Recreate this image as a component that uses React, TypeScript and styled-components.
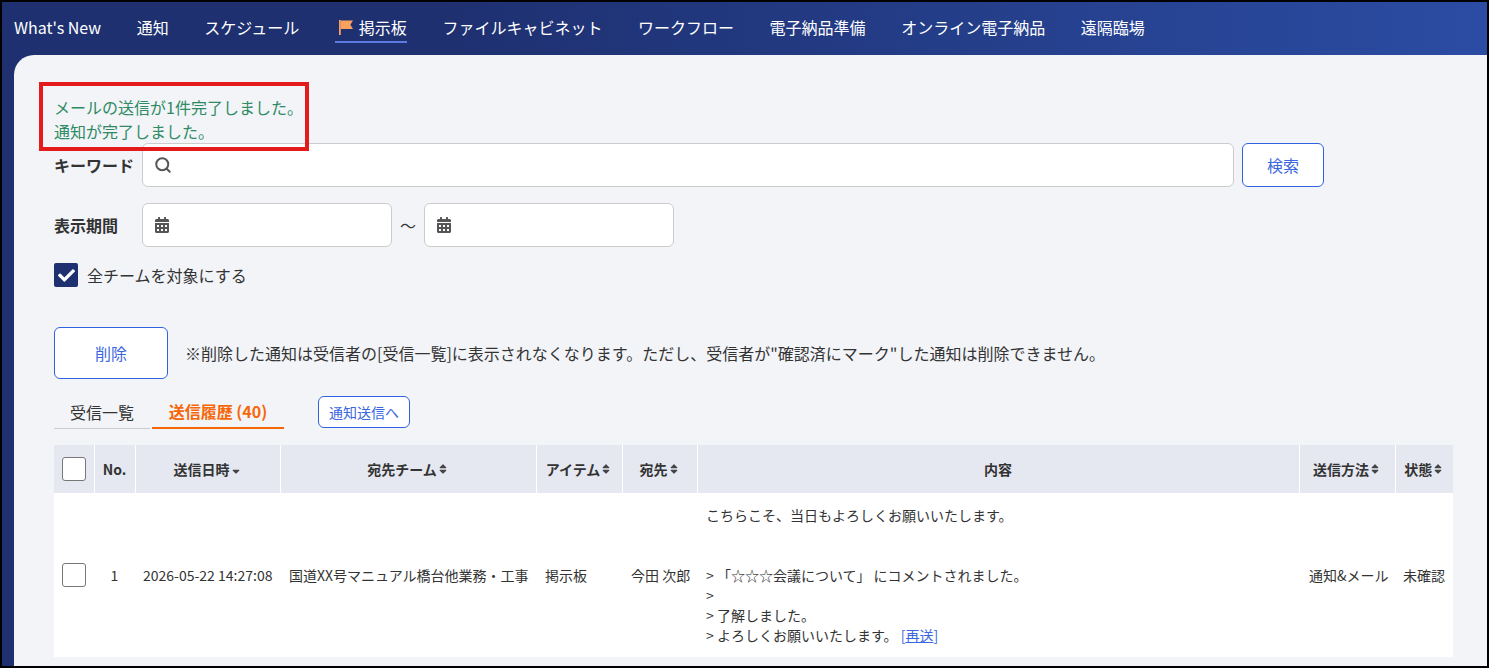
import styled, { createGlobalStyle } from 'styled-components';
import { FaCalendarAlt, FaCheck, FaSort, FaSortDown } from 'react-icons/fa';
import { Search } from 'lucide-react';

const navItems = [
  "What's New",
  '通知',
  'スケジュール',
  '掲示板',
  'ファイルキャビネット',
  'ワークフロー',
  '電子納品準備',
  'オンライン電子納品',
  '遠隔臨場',
];

const columns = [
  { label: '', width: 40 },
  { label: 'No.', width: 41 },
  { label: '送信日時', width: 145, sort: 'down' },
  { label: '宛先チーム', width: 256, sort: 'both' },
  { label: 'アイテム', width: 86, sort: 'both' },
  { label: '宛先', width: 75, sort: 'both' },
  { label: '内容', width: 602 },
  { label: '送信方法', width: 96, sort: 'both' },
  { label: '状態', width: 58, sort: 'both' },
];

function App() {
  return (
    <Frame>
      <GlobalStyle />
      <NavBar>
        {navItems.map((item) => (
          <NavItem key={item} $active={item === '掲示板'}>
            {item === '掲示板' && (
              <FlagIcon width="16" height="16" viewBox="0 0 16 16">
                <path d="M1 1h1.8v15H1z" fill="#f9a15f" />
                <path d="M2.8 1.5H15l-2.6 4.2 2.6 4.3H2.8z" fill="#f9a15f" />
              </FlagIcon>
            )}
            {item}
          </NavItem>
        ))}
      </NavBar>
      <Panel>
        <Messages>
          <div>メールの送信が1件完了しました。</div>
          <div>通知が完了しました。</div>
        </Messages>
        <RedMark />
        <FormRow>
          <FieldLabel>キーワード</FieldLabel>
          <KeywordBox>
            <Search size={18} color="#555" strokeWidth={2.6} />
          </KeywordBox>
          <OutlineButton $width={82} $height={44}>検索</OutlineButton>
        </FormRow>
        <DateRow>
          <FieldLabel>表示期間</FieldLabel>
          <DateBox>
            <FaCalendarAlt size={16} color="#555" />
          </DateBox>
          <Tilde>～</Tilde>
          <DateBox>
            <FaCalendarAlt size={16} color="#555" />
          </DateBox>
        </DateRow>
        <CheckRow>
          <CheckedBox>
            <FaCheck size={17} color="#fff" />
          </CheckedBox>
          全チームを対象にする
        </CheckRow>
        <DeleteRow>
          <OutlineButton $width={114} $height={52}>削除</OutlineButton>
          <Note>
            ※削除した通知は受信者の[受信一覧]に表示されなくなります。ただし、受信者が"確認済にマーク"した通知は削除できません。
          </Note>
        </DeleteRow>
        <TabRow>
          <Tab>受信一覧</Tab>
          <ActiveTab>送信履歴 (40)</ActiveTab>
          <SmallButton>通知送信へ</SmallButton>
        </TabRow>
        <Table>
          <colgroup>
            {columns.map((c, i) => (
              <col key={i} width={c.width} />
            ))}
          </colgroup>
          <thead>
            <tr>
              {columns.map((c, i) => (
                <Th key={i}>
                  {i === 0 ? (
                    <CheckBox />
                  ) : (
                    <HeadInner>
                      {c.label}
                      {c.sort === 'both' && <FaSort size={12} color="#444" />}
                      {c.sort === 'down' && <FaSortDown size={12} color="#444" />}
                    </HeadInner>
                  )}
                </Th>
              ))}
            </tr>
          </thead>
          <tbody>
            <tr>
              <CenterCell><CheckBox /></CenterCell>
              <CenterCell>1</CenterCell>
              <Td $pad={8}>2026-05-22 14:27:08</Td>
              <Td>国道XX号マニュアル橋台他業務・工事</Td>
              <Td>掲示板</Td>
              <Td>今田 次郎</Td>
              <BodyCell>
                <div>こちらこそ、当日もよろしくお願いいたします。</div>
                <div>&nbsp;</div>
                <div>&nbsp;</div>
                <div>&gt; 「☆☆☆会議について」 にコメントされました。</div>
                <div>&gt;</div>
                <div>&gt; 了解しました。</div>
                <div>
                  &gt; よろしくお願いいたします。 <Resend>[<u>再送</u>]</Resend>
                </div>
              </BodyCell>
              <Td $pad={10}>通知&amp;メール</Td>
              <Td $pad={8}>未確認</Td>
            </tr>
          </tbody>
        </Table>
      </Panel>
    </Frame>
  );
}

const GlobalStyle = createGlobalStyle`
  html, body {
    margin: 0;
    padding: 0;
    background: #1e3070;
  }
  * {
    box-sizing: border-box;
  }
`;

const Frame = styled.div`
  width: 1489px;
  height: 668px;
  border: 2px solid #000;
  overflow: hidden;
  background: linear-gradient(90deg, #1e3070 0%, #1e3070 30%, #2b4ca3 100%);
  font-family: 'Noto Sans CJK JP', 'Noto Sans', sans-serif;
  color: #333;
`;

const NavBar = styled.nav`
  height: 53px;
  display: flex;
  align-items: center;
  gap: 35.6px;
  padding: 0 0 3px 12px;
`;

const NavItem = styled.div<{ $active?: boolean }>`
  display: flex;
  align-items: center;
  height: 30px;
  color: #fff;
  font-size: 16px;
  line-height: 28px;
  margin-top: 1px;
  border-bottom: 2px solid ${(p) => (p.$active ? '#5b7be3' : 'transparent')};
`;

const FlagIcon = styled.svg`
  margin: 0 5px 0 3px;
`;

const Panel = styled.main`
  position: relative;
  height: 611px;
  margin-left: 12px;
  padding: 40px 34px 0 40px;
  background: #f2f4f8;
  border-top-left-radius: 20px;
`;

const Messages = styled.div`
  height: 48px;
  color: #2f8a63;
  font-size: 16px;
  line-height: 24px;
`;

const RedMark = styled.div`
  position: absolute;
  left: 25px;
  top: 27px;
  width: 270px;
  height: 69px;
  border: 4px solid #e31b1b;
  pointer-events: none;
`;

const FormRow = styled.div`
  display: flex;
  align-items: center;
  height: 44px;
`;

const DateRow = styled(FormRow)`
  margin-top: 16px;
`;

const FieldLabel = styled.div`
  width: 88px;
  font-size: 16px;
  font-weight: 700;
`;

const KeywordBox = styled.div`
  width: 1092px;
  height: 44px;
  margin-right: 8px;
  padding-left: 11px;
  display: flex;
  align-items: center;
  background: #fff;
  border: 1px solid #ccc;
  border-radius: 6px;
`;

const DateBox = styled(KeywordBox)`
  width: 250px;
  margin-right: 0;
`;

const Tilde = styled.span`
  width: 32px;
  text-align: center;
  font-size: 16px;
`;

const OutlineButton = styled.button<{ $width: number; $height: number }>`
  width: ${(p) => p.$width}px;
  height: ${(p) => p.$height}px;
  flex-shrink: 0;
  background: #fff;
  border: 1px solid #2f62e0;
  border-radius: 6px;
  color: #3a66e0;
  font-family: inherit;
  font-size: 16px;
`;

const CheckRow = styled.div`
  display: flex;
  align-items: center;
  gap: 9px;
  height: 24px;
  margin-top: 16px;
  font-size: 16px;
`;

const CheckedBox = styled.span`
  width: 24px;
  height: 24px;
  display: flex;
  align-items: center;
  justify-content: center;
  background: #1e3070;
  border-radius: 2px;
`;

const DeleteRow = styled.div`
  display: flex;
  align-items: center;
  gap: 17px;
  margin-top: 40px;
`;

const Note = styled.div`
  font-size: 16px;
  white-space: nowrap;
`;

const TabRow = styled.div`
  display: flex;
  align-items: flex-start;
  height: 32px;
  margin-top: 17px;
`;

const Tab = styled.div`
  width: 96px;
  height: 33px;
  line-height: 32px;
  text-align: center;
  font-size: 16px;
  border-bottom: 1px solid #ccc;
`;

const ActiveTab = styled.div`
  width: 132px;
  height: 33px;
  margin-left: 2px;
  line-height: 31px;
  text-align: center;
  font-size: 16px;
  font-weight: 700;
  color: #f76707;
  border-bottom: 2px solid #f76707;
`;

const SmallButton = styled.button`
  width: 92px;
  height: 32px;
  margin-left: 34px;
  padding: 0;
  background: #fff;
  border: 1px solid #2f62e0;
  border-radius: 6px;
  color: #3a66e0;
  font-family: inherit;
  font-size: 14px;
`;

const Table = styled.table`
  width: 1399px;
  margin-top: 17px;
  border-collapse: collapse;
  table-layout: fixed;
  background: #fff;
`;

const Th = styled.th`
  height: 48px;
  padding: 0;
  background: #e5e8f1;
  border-left: 1px solid #fff;
  font-size: 14px;
  font-weight: 700;
  text-align: center;
  &:first-child {
    border-left: none;
  }
`;

const HeadInner = styled.span`
  display: inline-flex;
  align-items: center;
`;

const Td = styled.td<{ $pad?: number }>`
  height: 164px;
  padding: 0 0 1px ${(p) => p.$pad ?? 9}px;
  font-size: 14px;
  text-align: left;
  white-space: nowrap;
`;

const CenterCell = styled(Td)`
  padding: 0 0 1px;
  text-align: center;
`;

const BodyCell = styled(Td)`
  line-height: 20px;
`;

const Resend = styled.span`
  color: #3a66e0;
`;

const CheckBox = styled.span`
  display: inline-block;
  width: 24px;
  height: 24px;
  vertical-align: middle;
  background: #fff;
  border: 1px solid #777;
  border-radius: 3px;
`;

export default App;
